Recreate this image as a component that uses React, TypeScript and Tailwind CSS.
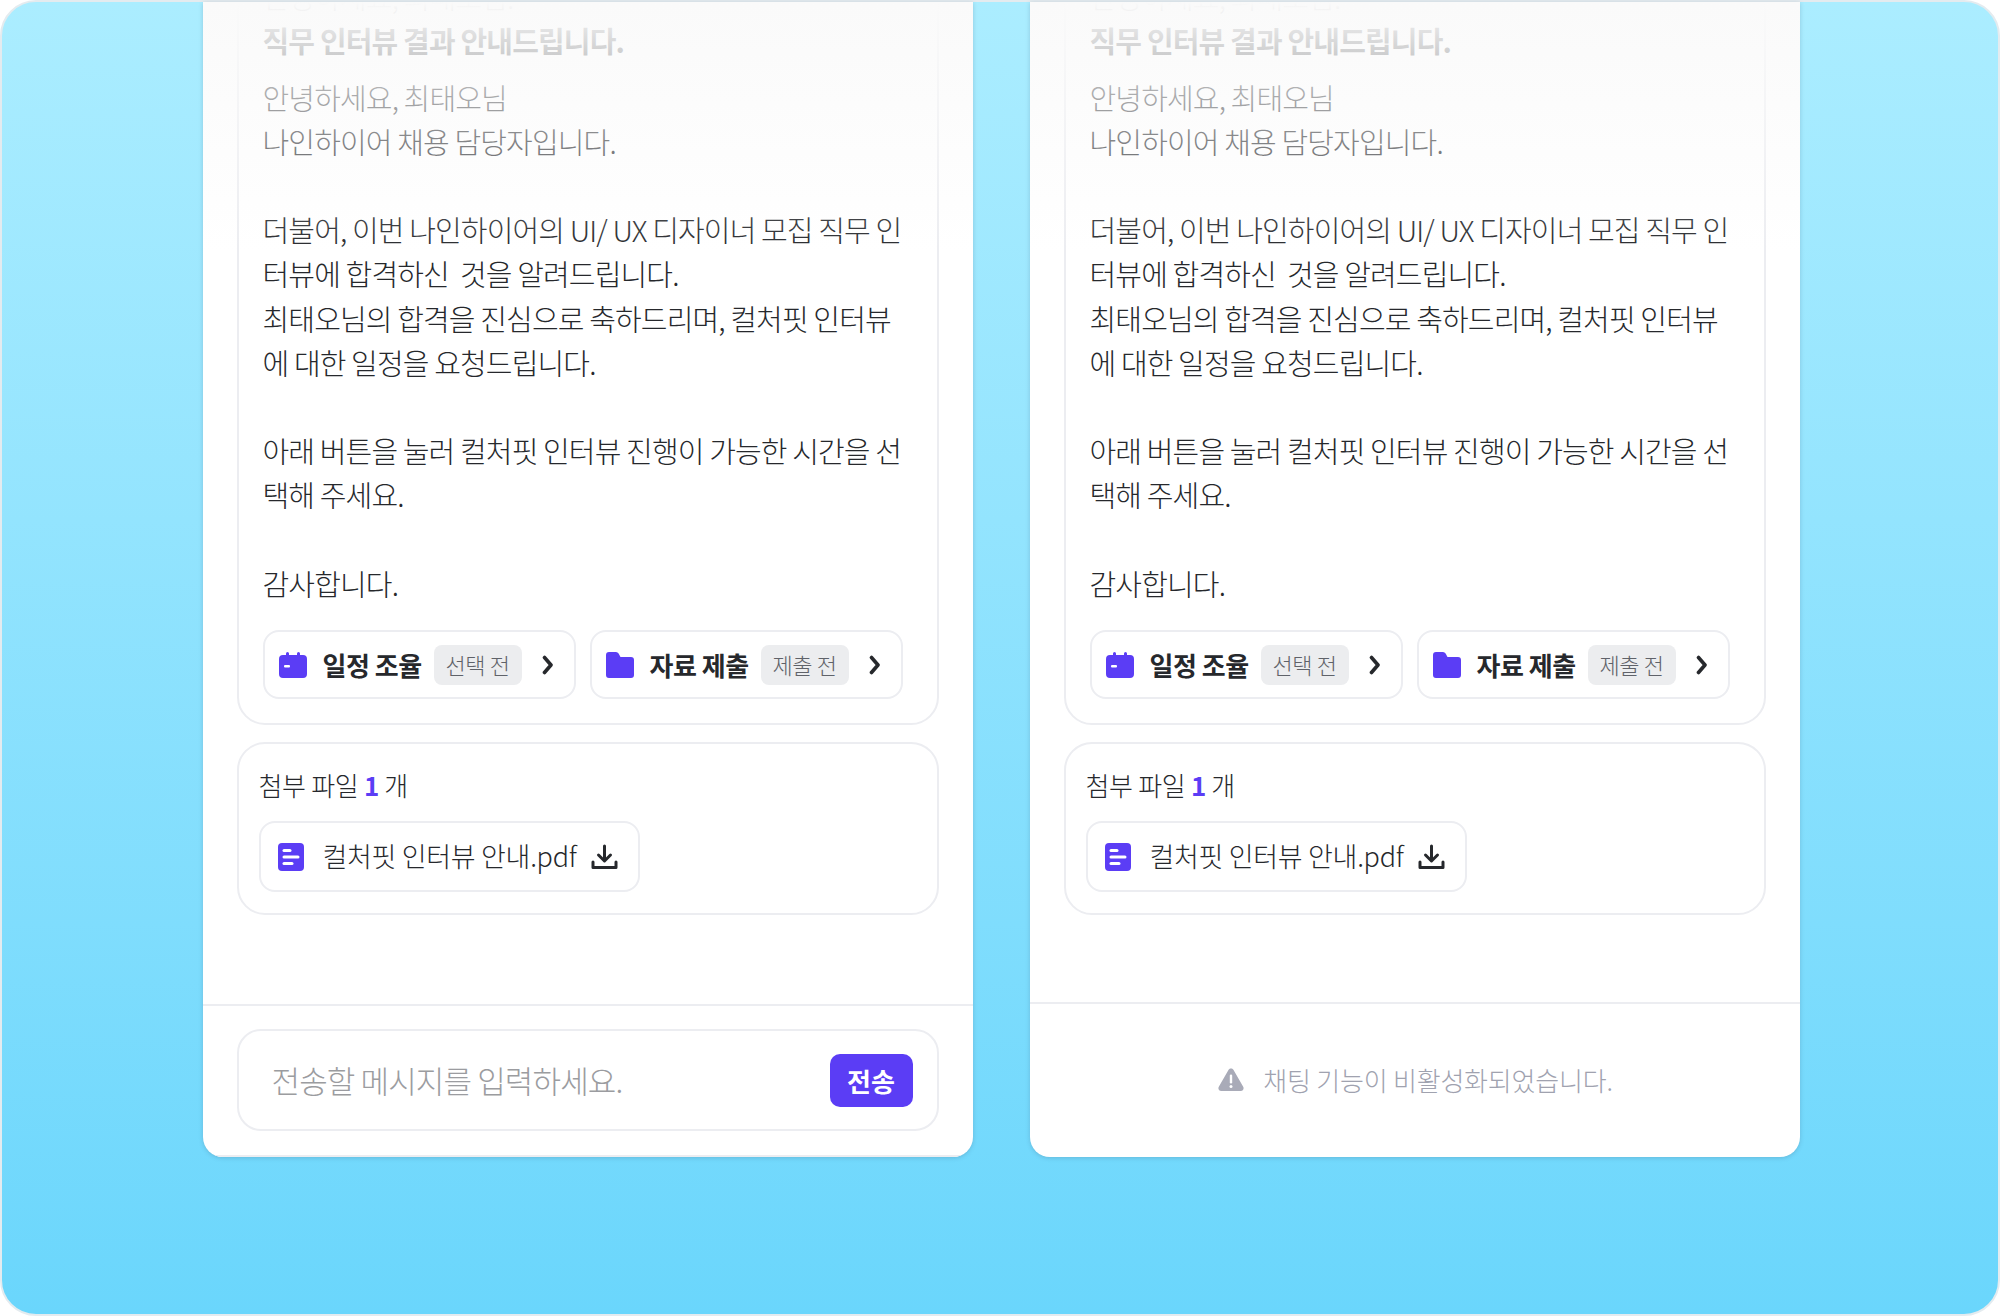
import React from "react";

const font = "font-['Noto_Sans_CJK_KR','Noto_Sans',sans-serif]";

function CalendarIcon() {
  return (
    <svg width="28" height="26" viewBox="0 0 28 26" fill="none">
      <path d="M7 1.500a1.500 1.500 0 0 1 3 0V3h8V1.500a1.500 1.500 0 0 1 3 0V3h3a4 4 0 0 1 4 4v15a4 4 0 0 1-4 4H4a4 4 0 0 1-4-4V7a4 4 0 0 1 4-4h3V1.500Z" fill="#5B3DF5" />
      <rect x="5" y="13" width="6" height="2.500" rx="1" fill="#fff" />
    </svg>
  );
}

function FolderIcon() {
  return (
    <svg width="28" height="28" viewBox="0 0 28 28" fill="none">
      <path d="M0 4a3 3 0 0 1 3-3h7a3 3 0 0 1 2.600 1.500L14.500 6H25a3 3 0 0 1 3 3v15a3 3 0 0 1-3 3H3a3 3 0 0 1-3-3V4Z" fill="#5B3DF5" />
    </svg>
  );
}

function ChevronIcon() {
  return (
    <svg width="12" height="20" viewBox="0 0 12 20" fill="none">
      <path d="M2.500 2.500L9 10l-6.500 7.500" stroke="#26282C" strokeWidth="3.600" strokeLinecap="round" strokeLinejoin="round" />
    </svg>
  );
}

function FileIcon() {
  return (
    <svg width="26" height="28" viewBox="0 0 26 28" fill="none">
      <rect width="26" height="28" rx="4" fill="#5B3DF5" />
      <rect x="4.500" y="6" width="9" height="3" rx="1.500" fill="#fff" />
      <rect x="4.500" y="12.500" width="17" height="3" rx="1.500" fill="#fff" />
      <rect x="4.500" y="19" width="11" height="3" rx="1.500" fill="#fff" />
    </svg>
  );
}

function DownloadIcon() {
  return (
    <svg width="27" height="26" viewBox="0 0 27 26" fill="none">
      <path d="M13.500 2v14M7.500 11l6 6 6-6" stroke="#26282C" strokeWidth="3" strokeLinecap="round" strokeLinejoin="round" />
      <path d="M2 18v5.500h23V18" stroke="#26282C" strokeWidth="3" strokeLinecap="round" strokeLinejoin="round" />
    </svg>
  );
}

function WarningIcon() {
  return (
    <svg width="26" height="24" viewBox="0 0 26 24" fill="none">
      <path d="M10.600 1.800c1.100-1.900 3.700-1.900 4.800 0l9.800 17c1.100 1.900-.2 4.200-2.400 4.200H3.200C1 23-.3 20.700.8 18.800l9.800-17Z" fill="#A9ABB8" />
      <rect x="11.800" y="6.500" width="2.400" height="9" rx="1.200" fill="#fff" />
      <circle cx="13" cy="18.500" r="1.500" fill="#fff" />
    </svg>
  );
}

function ActionButton({ icon, label, badge }: { icon: React.ReactNode; label: string; badge: string }) {
  return (
    <div className="flex h-[69px] w-[313px] items-center rounded-[16px] border-2 border-[#ECEDF1] bg-white pl-[14px]">
      {icon}
      <span className="ml-[16px] text-[26px] leading-none font-bold tracking-[-0.5px] whitespace-nowrap text-[#26282C]">{label}</span>
      <span className="ml-[12px] flex h-[40px] w-[88px] items-center justify-center rounded-[8px] bg-[#ECEDEF] text-[22px] font-light tracking-[-0.3px] whitespace-nowrap text-[#5F6269]">
        {badge}
      </span>
      <span className="ml-[20px] flex">
        <ChevronIcon />
      </span>
    </div>
  );
}

function ChatPanel({ footer, dividerClass }: { footer: React.ReactNode; dividerClass: string }) {
  return (
    <div className="relative flex h-full w-[770px] flex-col justify-end overflow-hidden rounded-b-[20px] bg-white shadow-[0_1px_4px_rgba(60,90,120,0.25)]">
      <div className="flex shrink-0 flex-col gap-[17px] px-[34px]">
        {/* Message */}
        <div className="rounded-[28px] border-2 border-[#ECEDF1] px-[24px] pb-[24px]">
          <div className="text-[29px] leading-[44.200px] font-light tracking-[-0.85px] text-[#26282C]">
            <p>안녕하세요, 최태오님.</p>
            <p className="font-bold">직무 인터뷰 결과 안내드립니다.</p>
            <p className="mt-[12px]">안녕하세요, 최태오님</p>
            <p>나인하이어 채용 담당자입니다.</p>
            <p className="mt-[44.200px]">더불어, 이번 나인하이어의 UI/ UX 디자이너 모집 직무 인</p>
            <p className="whitespace-pre">터뷰에 합격하신  것을 알려드립니다.</p>
            <p>최태오님의 합격을 진심으로 축하드리며, 컬처핏 인터뷰</p>
            <p>에 대한 일정을 요청드립니다.</p>
            <p className="mt-[44.200px]">아래 버튼을 눌러 컬처핏 인터뷰 진행이 가능한 시간을 선</p>
            <p>택해 주세요.</p>
            <p className="mt-[44.200px]">감사합니다.</p>
          </div>
          <div className="mt-[25px] flex gap-[14px]">
            <ActionButton icon={<CalendarIcon />} label="일정 조율" badge="선택 전" />
            <ActionButton icon={<FolderIcon />} label="자료 제출" badge="제출 전" />
          </div>
        </div>

        {/* Attachments */}
        <div className="rounded-[28px] border-2 border-[#ECEDF1] px-[20px] pt-[22px] pb-[21px]">
          <p className="text-[26px] leading-[38px] font-light tracking-[-0.3px] text-[#26282C]">
            첨부 파일 <span className="font-bold text-[#5B3DF5]">1</span> 개
          </p>
          <div className="mt-[17px] flex h-[71px] w-[381px] items-center rounded-[16px] border-2 border-[#ECEDF1] pl-[17px]">
            <FileIcon />
            <span className="ml-[19px] text-[27px] font-light tracking-[-0.3px] whitespace-nowrap text-[#26282C]">컬처핏 인터뷰 안내.pdf</span>
            <span className="ml-[15px] flex">
              <DownloadIcon />
            </span>
          </div>
        </div>
      </div>

      <div className={dividerClass}>{footer}</div>

      {/* Fade over scrolled content */}
      <div className="pointer-events-none absolute inset-x-0 top-0 h-[250px] bg-gradient-to-b from-[#FAFAFA] to-white/0" />
    </div>
  );
}

export default function App() {
  return (
    <div className={`${font} h-[1316px] w-[2000px] overflow-hidden bg-white`}>
      <div className="flex h-full justify-center gap-[57px] rounded-[36px] border-2 border-[#E4EBEF] bg-gradient-to-b from-[#ABEDFF] to-[#6AD6FC] pb-[157px] pl-[2px]">
        <ChatPanel
          dividerClass="mt-[89px] h-[153px] shrink-0 border-t-2 border-b-2 border-[#ECEDF1] px-[34px] pt-[23px]"
          footer={
            <div className="flex h-[102px] items-center justify-between rounded-[24px] border-2 border-[#ECEDF1] pr-[24px] pl-[33px]">
              <span className="text-[31px] font-light tracking-[-0.85px] text-[#9B9CA0]">전송할 메시지를 입력하세요.</span>
              <span className="flex h-[53px] w-[83px] items-center justify-center rounded-[10px] bg-[#5B3DF5] text-[26px] font-bold text-white">전송</span>
            </div>
          }
        />
        <ChatPanel
          dividerClass="mt-[87px] flex h-[155px] shrink-0 items-center justify-center gap-[19px] border-t-2 border-[#ECEDF1] pb-[2px] pl-[2px]"
          footer={
            <>
              <WarningIcon />
              <span className="text-[26px] font-light tracking-[-0.2px] text-[#A0A2AF]">채팅 기능이 비활성화되었습니다.</span>
            </>
          }
        />
      </div>
    </div>
  );
}
